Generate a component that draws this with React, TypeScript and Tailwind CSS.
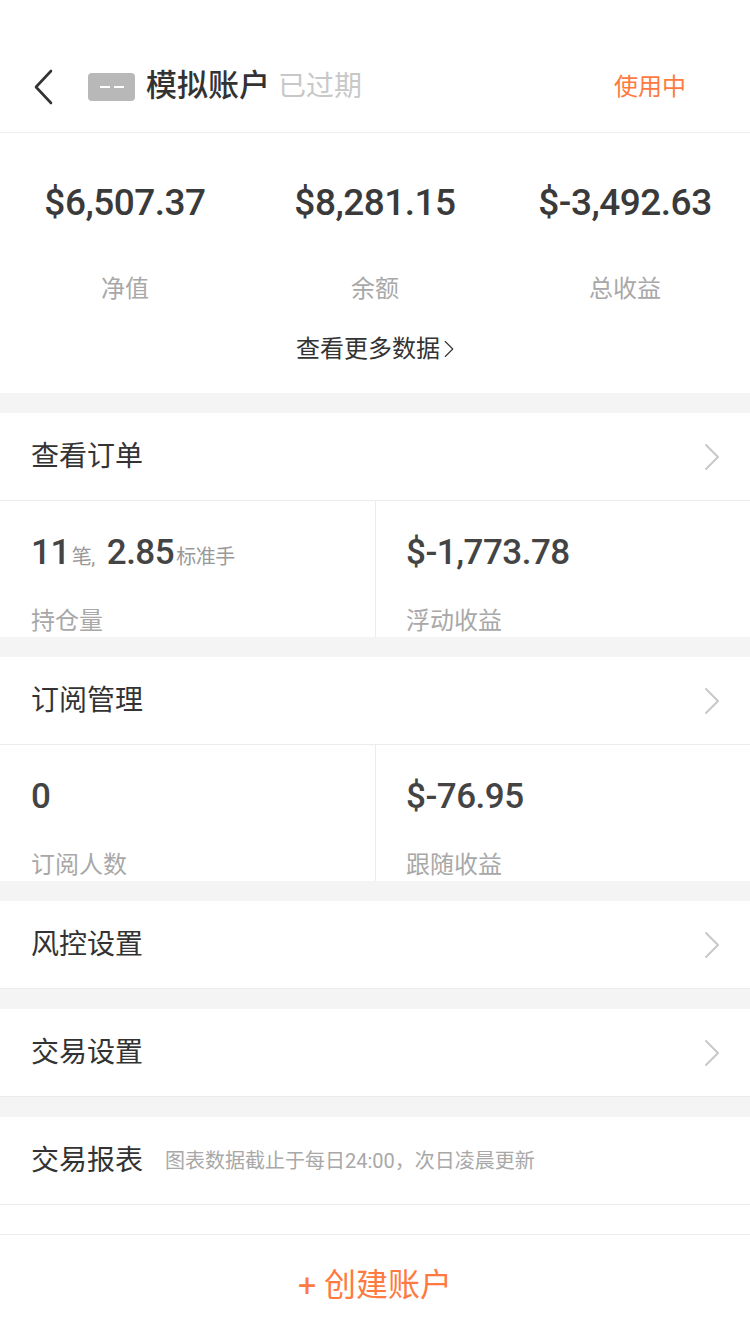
import React from 'react';

const cjk = { fontFamily: 'Roboto, "Noto Sans CJK SC", sans-serif' };
const num = { fontFamily: 'Roboto, "Noto Sans CJK SC", sans-serif' };

const Chevron: React.FC<{ className?: string; color?: string; width?: number }> = ({ className, color = '#c8c8c8', width = 2 }) => (
  <svg className={className} viewBox="0 0 16 28" fill="none">
    <path d="M2 2 L14 14 L2 26" stroke={color} strokeWidth={width} strokeLinecap="round" strokeLinejoin="round" />
  </svg>
);

// 普通行：标题 + 右箭头
const LinkRow: React.FC<{ title: string }> = ({ title }) => (
  <div className="h-[88px] flex items-center justify-between pl-[31px] pr-[30px] border-b border-[#ececec] bg-white">
    <span className="text-[28px] text-[#333]">{title}</span>
    <Chevron className="w-[16px] h-[28px]" />
  </div>
);

const StatCell: React.FC<{ value: React.ReactNode; label: string; border?: boolean }> = ({ value, label, border }) => (
  <div className={`flex-1 h-[136px] overflow-hidden ${border ? 'border-l border-[#ececec] pl-[30px]' : 'pl-[31px]'}`}>
    <div className="h-[104px] flex items-center text-[35px] font-medium text-[#444] tracking-[-0.5px]" style={num}>
      {value}
    </div>
    <div className="text-[24px] text-[#a8a8a8] leading-[32px]">{label}</div>
  </div>
);

const Gap = () => <div className="h-[20px] bg-[#f4f4f4]" />;

export default function App() {
  return (
    <div className="w-[750px] min-h-[1334px] bg-white" style={cjk}>
      {/* 顶部 */}
      <div className="h-[133px] pt-[41px] flex items-center border-b border-[#eeeeee]">
        <div className="w-[88px] flex justify-start pl-[33px]">
          <svg className="w-[21px] h-[36px]" viewBox="0 0 21 36" fill="none">
            <path d="M18 2 L3 18 L18 34" stroke="#333" strokeWidth="2.6" strokeLinecap="round" strokeLinejoin="round" />
          </svg>
        </div>
        <div className="w-[47px] h-[28px] rounded-[4px] bg-[#b8b8b8] flex items-center justify-center gap-[4px]">
          <span className="w-[10px] h-[2px] bg-white" />
          <span className="w-[10px] h-[2px] bg-white" />
        </div>
        <span className="ml-[11px] text-[31px] font-medium text-[#333]">模拟账户</span>
        <span className="ml-[8px] text-[28px] text-[#c8c8c8]">已过期</span>
        <span className="ml-auto mr-[64px] text-[24px] text-[#ff7a40]">使用中</span>
      </div>

      {/* 数据 */}
      <div className="h-[260px] flex flex-col">
        <div className="grid grid-cols-3 pt-[48px]">
          {[
            ['$6,507.37', '净值'],
            ['$8,281.15', '余额'],
            ['$-3,492.63', '总收益'],
          ].map(([v, l]) => (
            <div key={l} className="flex flex-col items-center">
              <div className="h-[44px] flex items-center text-[37px] font-medium text-[#3a3a3a] tracking-[-0.5px]" style={num}>{v}</div>
              <div className="mt-[48px] text-[24px] text-[#a8a8a8] leading-[32px]">{l}</div>
            </div>
          ))}
        </div>
        <div className="mt-[26px] flex items-center justify-center gap-[4px] text-[24px] text-[#333]">
          <span>查看更多数据</span>
          <Chevron className="w-[10px] h-[20px]" color="#333" width={1.8} />
        </div>
      </div>

      <Gap />
      <LinkRow title="查看订单" />
      <div className="flex">
        <StatCell
          value={
            <span>
              11<span className="ml-[2px] text-[20px] text-[#999] font-normal">笔,</span>
              <span className="ml-[12px]">2.85</span>
              <span className="ml-[2px] text-[20px] text-[#999] font-normal">标准手</span>
            </span>
          }
          label="持仓量"
        />
        <StatCell value="$-1,773.78" label="浮动收益" border />
      </div>

      <Gap />
      <LinkRow title="订阅管理" />
      <div className="flex">
        <StatCell value="0" label="订阅人数" />
        <StatCell value="$-76.95" label="跟随收益" border />
      </div>

      <Gap />
      <LinkRow title="风控设置" />
      <Gap />
      <LinkRow title="交易设置" />
      <Gap />

      <div className="h-[88px] flex items-center pl-[31px] border-b border-[#ececec]">
        <span className="text-[28px] text-[#333]">交易报表</span>
        <span className="ml-[22px] text-[20px] text-[#a8a8a8]">图表数据截止于每日24:00，次日凌晨更新</span>
      </div>
      <div className="h-[30px] border-b border-[#ececec]" />

      <div className="h-[99px] flex items-center justify-center text-[32px] text-[#ff7a40]">
        <span className="mr-[8px]">+</span>
        <span>创建账户</span>
      </div>
    </div>
  );
}
